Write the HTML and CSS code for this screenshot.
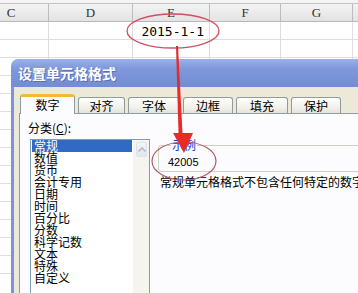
FILE: index.html
```html
<!DOCTYPE html>
<html lang="zh-CN">
<head>
<meta charset="utf-8">
<title>设置单元格格式</title>
<link rel="stylesheet" href="styles.css">
</head>
<body>
<div class="sheet">
  <div class="strip"></div>
  <div class="row head">
    <div class="cell">C</div><div class="cell">D</div><div class="cell">E</div><div class="cell">F</div><div class="cell">G</div><div class="cell"></div>
  </div>
  <div class="row">
    <div class="cell"></div><div class="cell"></div><div class="cell date">2015-1-1</div><div class="cell"></div><div class="cell"></div><div class="cell"></div>
  </div>
  <div class="row"><div class="cell"></div><div class="cell"></div><div class="cell"></div><div class="cell"></div><div class="cell"></div><div class="cell"></div></div>
  <div class="row"><div class="cell"></div><div class="cell"></div><div class="cell"></div><div class="cell"></div><div class="cell"></div><div class="cell"></div></div>
  <div class="row"><div class="cell"></div><div class="cell"></div><div class="cell"></div><div class="cell"></div><div class="cell"></div><div class="cell"></div></div>
  <div class="row"><div class="cell"></div><div class="cell"></div><div class="cell"></div><div class="cell"></div><div class="cell"></div><div class="cell"></div></div>
  <div class="row"><div class="cell"></div><div class="cell"></div><div class="cell"></div><div class="cell"></div><div class="cell"></div><div class="cell"></div></div>
  <div class="row"><div class="cell"></div><div class="cell"></div><div class="cell"></div><div class="cell"></div><div class="cell"></div><div class="cell"></div></div>
  <div class="row"><div class="cell"></div><div class="cell"></div><div class="cell"></div><div class="cell"></div><div class="cell"></div><div class="cell"></div></div>
  <div class="row"><div class="cell"></div><div class="cell"></div><div class="cell"></div><div class="cell"></div><div class="cell"></div><div class="cell"></div></div>
  <div class="row"><div class="cell"></div><div class="cell"></div><div class="cell"></div><div class="cell"></div><div class="cell"></div><div class="cell"></div></div>
  <div class="row"><div class="cell"></div><div class="cell"></div><div class="cell"></div><div class="cell"></div><div class="cell"></div><div class="cell"></div></div>
  <div class="row"><div class="cell"></div><div class="cell"></div><div class="cell"></div><div class="cell"></div><div class="cell"></div><div class="cell"></div></div>
  <div class="row"><div class="cell"></div><div class="cell"></div><div class="cell"></div><div class="cell"></div><div class="cell"></div><div class="cell"></div></div>
  <div class="row"><div class="cell"></div><div class="cell"></div><div class="cell"></div><div class="cell"></div><div class="cell"></div><div class="cell"></div></div>
</div>

<div class="dialog">
  <div class="titlebar">设置单元格格式</div>
  <div class="dbody">
    <div class="tabs">
      <div class="tab active w55">数字</div>
      <div class="tab w47">对齐</div>
      <div class="tab w52">字体</div>
      <div class="tab w50">边框</div>
      <div class="tab w52">填充</div>
      <div class="tab w50">保护</div>
    </div>
    <div class="panel">
      <div class="cat">
        <div class="cat-label">分类(<u>C</u>):</div>
        <div class="list">
          <div class="items">
            <div class="item sel">常规</div>
            <div class="item">数值</div>
            <div class="item">货币</div>
            <div class="item">会计专用</div>
            <div class="item">日期</div>
            <div class="item">时间</div>
            <div class="item">百分比</div>
            <div class="item">分数</div>
            <div class="item">科学记数</div>
            <div class="item">文本</div>
            <div class="item">特殊</div>
            <div class="item">自定义</div>
          </div>
          <div class="scroll">
            <div class="sbtn">
              <svg width="8" height="5" viewBox="0 0 8 5"><path d="M0.5 4.5 L4 1 L7.5 4.5" fill="none" stroke="#b8bcc4" stroke-width="1.6"/></svg>
            </div>
          </div>
        </div>
      </div>
      <div class="info">
        <fieldset class="sample">
          <legend>示例</legend>
          <div class="sample-val">42005</div>
        </fieldset>
        <div class="desc">常规单元格格式不包含任何特定的数字格式。</div>
      </div>
    </div>
  </div>
</div>

<svg class="marks" width="358" height="293" viewBox="0 0 358 293">
  <ellipse cx="173" cy="31" rx="46" ry="17" fill="none" stroke="#cf4f60" stroke-width="1.3"/>
  <ellipse cx="184" cy="161" rx="32" ry="19" fill="none" stroke="#b45a6a" stroke-width="1.2"/>
  <polygon points="176,46 178,46 182.5,133 193,133 184,153 173,133 178.5,133" fill="#e52b2b"/>
</svg>
</body>
</html>
```

FILE: styles.css
```css
html, body {
  margin: 0;
  padding: 0;
}
body {
  width: 358px;
  height: 293px;
  overflow: hidden;
  position: relative;
  background: #fff;
  font-family: "Noto Sans CJK SC", "Liberation Sans", sans-serif;
  color: #000;
}

/* spreadsheet */
.sheet {
  display: flex;
  flex-direction: column;
}
.strip {
  height: 3px;
  background: #f4f4f4;
  border-bottom: 1px solid #c4c4c4;
}
.row {
  display: grid;
  grid-template-columns: 75px 84px 77px 71px 72px 60px;
  margin-left: -26px;
  height: 17px;
  border-bottom: 1px solid #dedede;
}
.row.head {
  background: linear-gradient(#f3f3f3, #e3e3e3);
  border-bottom-color: #b8b8b8;
  font-family: "Liberation Serif", serif;
  font-size: 13px;
  color: #333;
}
.cell {
  border-right: 1px solid #dedede;
  line-height: 17px;
  text-align: center;
}
.head .cell {
  border-right-color: #bcbcbc;
}
.cell.date {
  text-align: right;
  padding-right: 5px;
  font-family: "DejaVu Sans Mono", monospace;
  font-size: 13px;
  line-height: 19px;
}

/* dialog */
.dialog {
  position: absolute;
  left: 11px;
  top: 59px;
  width: 372px;
  border-radius: 7px 7px 0 0;
  overflow: hidden;
  z-index: 1;
}
.titlebar {
  height: 28px;
  background: linear-gradient(#9bb1ea, #7f98dc 35%, #728dd6);
  color: #fff;
  font-weight: bold;
  font-size: 14px;
  line-height: 28px;
  padding-left: 7px;
  text-shadow: 1px 1px 0 #5a6eb0;
}
.dbody {
  background: #ece9d8;
  border-left: 3px solid #8292d6;
  padding: 7px 0 0 5px;
  height: 220px;
}
.tabs {
  display: flex;
  align-items: flex-end;
  gap: 3px;
  height: 19px;
  padding-left: 1px;
  position: relative;
  z-index: 1;
}
.tab {
  box-sizing: border-box;
  height: 16px;
  border: 1px solid #919b9c;
  border-bottom: none;
  border-radius: 3px 3px 0 0;
  background: linear-gradient(#ffffff, #f2f1ea 60%, #e4e3db);
  font-size: 12px;
  line-height: 15px;
  text-align: center;
}
.tab.active {
  height: 20px;
  margin-bottom: -1px;
  background: #fcfcfe;
  border-top: 3px solid #f7b83a;
  line-height: 16px;
}
.w55 { width: 55px; }
.w47 { width: 47px; }
.w52 { width: 52px; }
.w50 { width: 50px; }

.panel {
  background: #fcfcfe;
  border: 1px solid #919b9c;
  height: 200px;
  display: flex;
  gap: 8px;
}
.cat {
  margin: 8px 0 0 10px;
  display: flex;
  flex-direction: column;
}
.cat-label {
  margin-left: -2px;
  font-size: 12px;
  line-height: 12px;
}
.list {
  margin-top: 5px;
  width: 120px;
  height: 170px;
  box-sizing: border-box;
  border: 1px solid #7f9db9;
  background: #fff;
  display: flex;
}
.items {
  flex: 1;
  padding: 0 1px 0 1px;
  font-size: 12px;
  line-height: 12px;
}
.item {
  padding-left: 2px;
  height: 12px;
}
.item.sel {
  background: #316ac5;
  color: #fff;
}
.scroll {
  width: 16px;
  background: #f5f4ef;
  display: flex;
  flex-direction: column;
}
.sbtn {
  margin: 2px 2px 0 3px;
  height: 13px;
  border: 1px solid #dde2ea;
  border-radius: 2px;
  background: linear-gradient(#f2f4f8, #e2e6ee);
  display: flex;
  align-items: center;
  justify-content: center;
}

.info {
  flex: 1;
  margin-top: 25px;
  min-width: 0;
}
.sample {
  margin: 0;
  padding: 5px 0 3px 9px;
  border: 1px solid #d0d0bf;
  border-radius: 3px;
  min-width: 0;
}
.sample legend {
  padding: 0 1px;
  margin-left: 3px;
  font-size: 12px;
  line-height: 12px;
  color: #0046d5;
}
.sample-val {
  font-family: "Liberation Sans", sans-serif;
  font-size: 11px;
  line-height: 12px;
}
.desc {
  margin-top: 4px;
  margin-left: 2px;
  font-size: 12px;
  line-height: 12px;
  white-space: nowrap;
}

.marks {
  position: absolute;
  left: 0;
  top: 0;
  z-index: 2;
}
```
